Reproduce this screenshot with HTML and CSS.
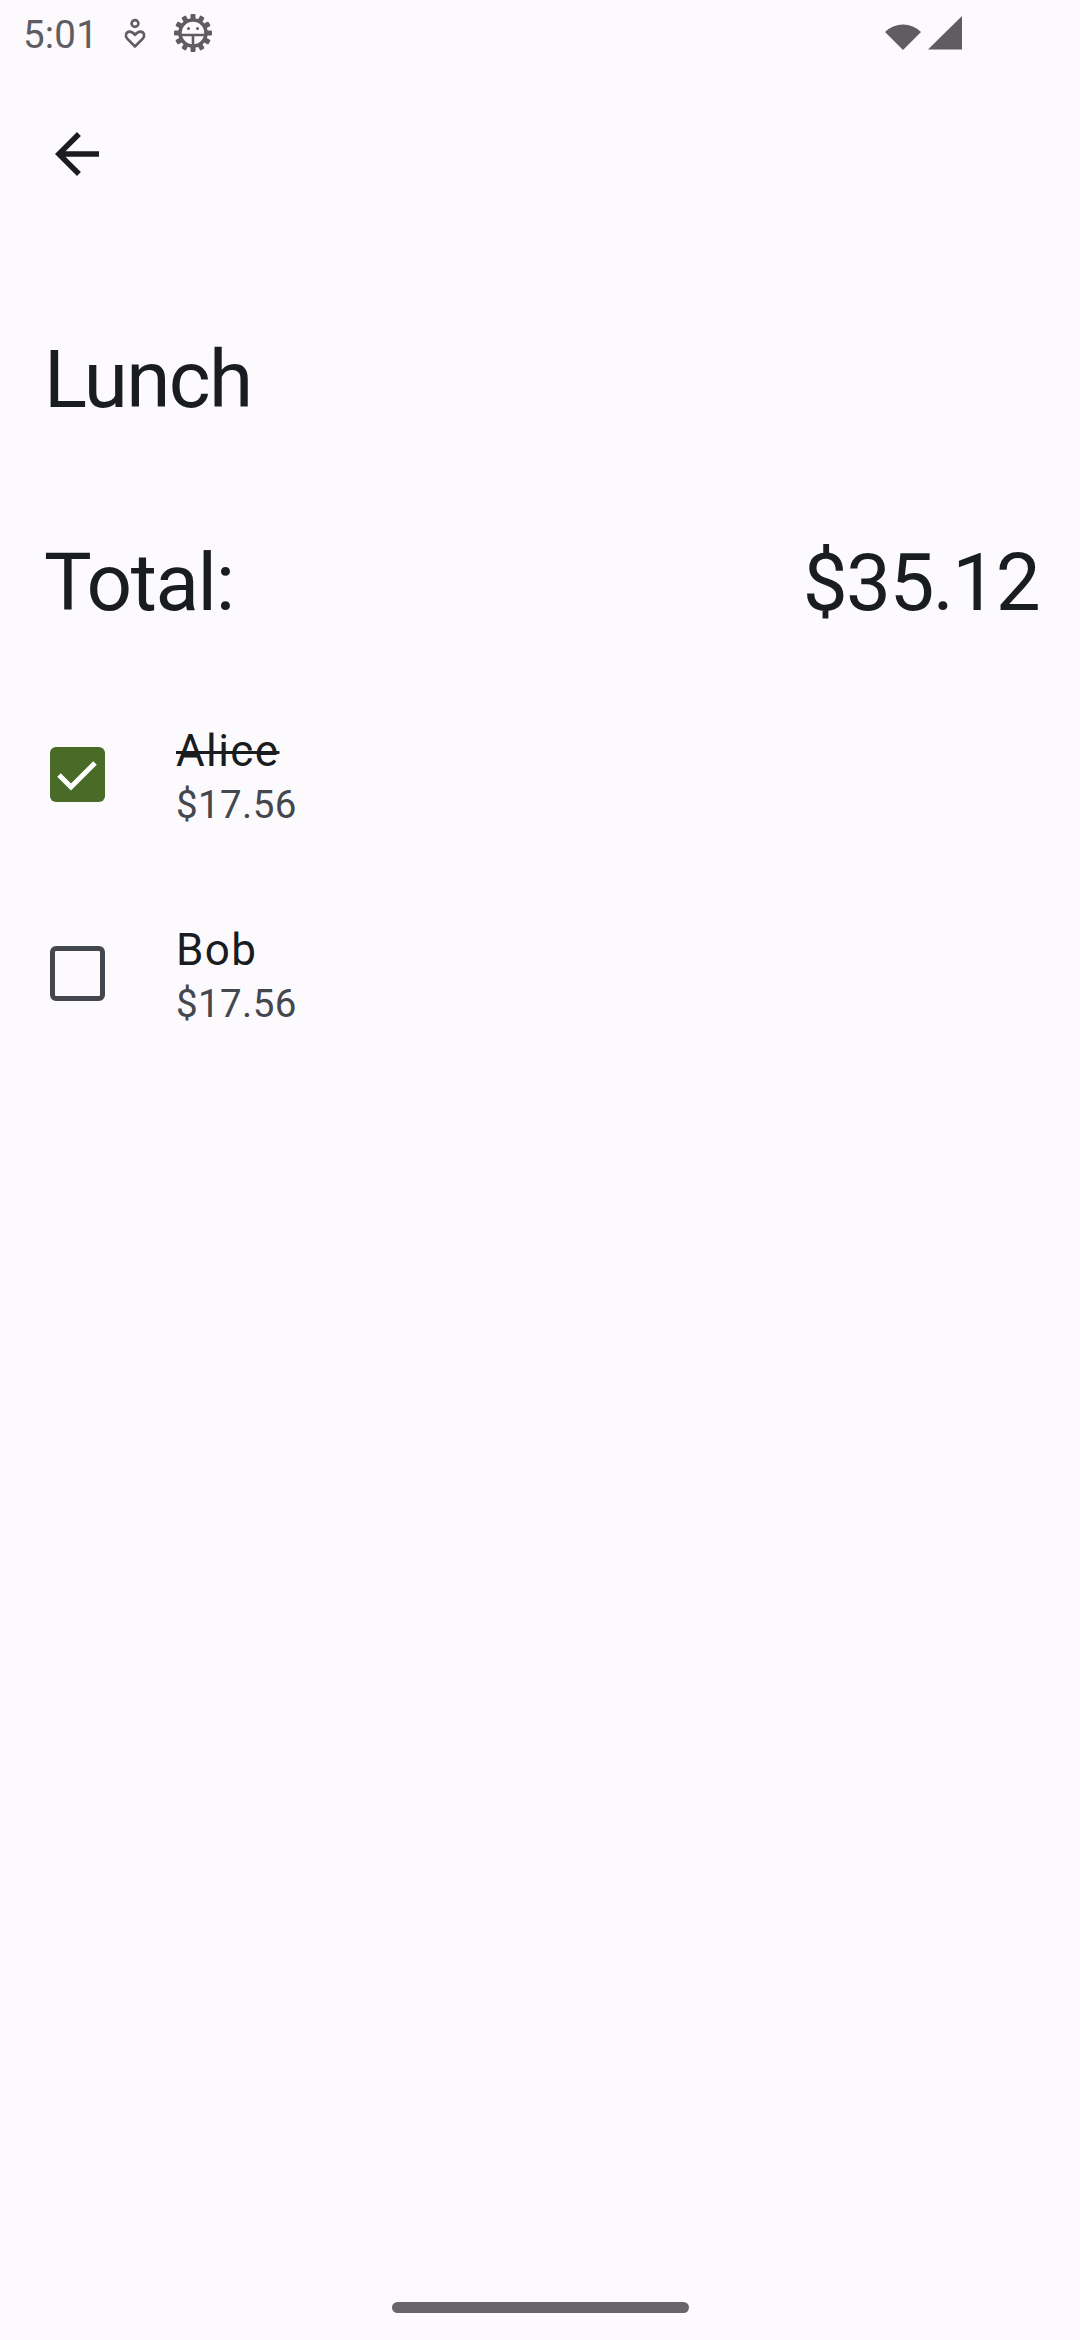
FILE: index.html
```html
<!DOCTYPE html>
<html lang="en">
<head>
<meta charset="utf-8">
<title>Lunch</title>
<link rel="stylesheet" href="styles.css">
</head>
<body>
<div class="screen">
  <div class="status-bar">
    <div class="status-left">
      <span class="clock">5:01</span>
      <svg class="ic-heart" width="24" height="32" viewBox="0 0 24 32">
        <circle cx="12" cy="5.5" r="3.4" fill="none" stroke="#605d62" stroke-width="2.6"/>
        <path d="M12 28.5 L4.2 20.7 C1.8 18.2 2.8 13.6 6.6 13.6 C9 13.6 10.5 15 12 16.8 C13.5 15 15 13.6 17.4 13.6 C21.2 13.6 22.2 18.2 19.8 20.7 Z" fill="none" stroke="#605d62" stroke-width="2.6" stroke-linejoin="round"/>
      </svg>
      <svg class="ic-gear" width="40" height="40" viewBox="0 0 40 40">
        <g fill="#605d62">
          <rect x="17.5" y="1" width="5" height="6" rx="1"/>
          <rect x="17.5" y="1" width="5" height="6" rx="1" transform="rotate(30 20 20)"/>
          <rect x="17.5" y="1" width="5" height="6" rx="1" transform="rotate(60 20 20)"/>
          <rect x="17.5" y="1" width="5" height="6" rx="1" transform="rotate(90 20 20)"/>
          <rect x="17.5" y="1" width="5" height="6" rx="1" transform="rotate(120 20 20)"/>
          <rect x="17.5" y="1" width="5" height="6" rx="1" transform="rotate(150 20 20)"/>
          <rect x="17.5" y="1" width="5" height="6" rx="1" transform="rotate(180 20 20)"/>
          <rect x="17.5" y="1" width="5" height="6" rx="1" transform="rotate(210 20 20)"/>
          <rect x="17.5" y="1" width="5" height="6" rx="1" transform="rotate(240 20 20)"/>
          <rect x="17.5" y="1" width="5" height="6" rx="1" transform="rotate(270 20 20)"/>
          <rect x="17.5" y="1" width="5" height="6" rx="1" transform="rotate(300 20 20)"/>
          <rect x="17.5" y="1" width="5" height="6" rx="1" transform="rotate(330 20 20)"/>
        </g>
        <circle cx="20" cy="20" r="13" fill="none" stroke="#605d62" stroke-width="3.6"/>
        <path d="M8 22 H32 M20 22 V32" stroke="#605d62" stroke-width="2.6"/>
        <circle cx="15.5" cy="15.5" r="1.5" fill="#605d62"/>
        <circle cx="24.5" cy="15.5" r="1.5" fill="#605d62"/>
      </svg>
    </div>
    <div class="status-right">
      <svg class="ic-wifi" width="42" height="35" viewBox="0 0 42 35">
        <path d="M21 34 L3 16 A25.5 25.5 0 0 1 39 16 Z" fill="#605d62"/>
      </svg>
      <svg class="ic-signal" width="34" height="34" viewBox="0 0 34 34">
        <path d="M0 33.5 H34 V0 Z" fill="#605d62"/>
      </svg>
    </div>
  </div>

  <div class="app-bar">
    <button class="icon-btn" aria-label="Back">
      <svg width="66" height="66" viewBox="0 0 24 24">
        <path d="M20 11H7.83l5.59-5.59L12 4l-8 8 8 8 1.41-1.41L7.83 13H20v-2z" fill="#1a1c20"/>
      </svg>
    </button>
  </div>

  <main class="content">
    <h1 class="title">Lunch</h1>
    <div class="total-row">
      <span>Total:</span>
      <span class="total-amount">$35.12</span>
    </div>

    <ul class="people">
      <li class="person">
        <span class="check-wrap">
          <span class="checkbox checked">
            <svg width="54" height="54" viewBox="0 0 54 54">
              <path d="M9 28 L21 40 L45 16" fill="none" stroke="#ffffff" stroke-width="5"/>
            </svg>
          </span>
        </span>
        <span class="person-text">
          <span class="person-name done">Alice</span>
          <span class="person-amount">$17.56</span>
        </span>
      </li>
      <li class="person">
        <span class="check-wrap">
          <span class="checkbox"></span>
        </span>
        <span class="person-text">
          <span class="person-name">Bob</span>
          <span class="person-amount">$17.56</span>
        </span>
      </li>
    </ul>
  </main>

  <div class="nav-bar">
    <span class="nav-handle"></span>
  </div>
</div>
</body>
</html>
```

FILE: styles.css
```css
* {
  box-sizing: border-box;
}

html, body {
  margin: 0;
  padding: 0;
  background: #fcfafd;
}

body {
  font-family: Roboto, "Noto Sans", "Liberation Sans", sans-serif;
  color: #1a1c20;
}

.screen {
  width: 1080px;
  height: 2340px;
  display: flex;
  flex-direction: column;
  overflow: hidden;
  background: #fcfafd;
}

.status-bar {
  height: 66px;
  flex: none;
  display: flex;
  align-items: center;
  justify-content: space-between;
  padding: 0 118px 0 23px;
}

.status-left {
  display: flex;
  align-items: center;
}

.clock {
  font-size: 38.5px;
  line-height: 66px;
  padding-top: 3px;
  color: #605d62;
  letter-spacing: 0.2px;
}

.ic-heart {
  margin-left: 25px;
  margin-top: 1px;
}

.ic-gear {
  margin-left: 26px;
}

.status-right {
  display: flex;
  align-items: center;
  gap: 4px;
}

.ic-signal {
  margin-top: -1px;
}

.app-bar {
  height: 176px;
  flex: none;
  display: flex;
  align-items: center;
  padding-left: 44px;
}

.icon-btn {
  width: 66px;
  height: 66px;
  padding: 0;
  border: 0;
  background: transparent;
  display: block;
}

.icon-btn svg {
  display: block;
}

.content {
  flex: 1;
  display: flex;
  flex-direction: column;
}

.title {
  margin: 90px 0 0 0;
  padding: 0 44px;
  font-size: 80px;
  font-weight: 400;
  line-height: 96px;
  letter-spacing: -1.6px;
  color: #191c20;
}

.total-row {
  margin-top: 107px;
  padding: 0 44px;
  display: flex;
  justify-content: space-between;
  font-size: 80px;
  line-height: 96px;
  letter-spacing: -1.4px;
  color: #191c20;
}

.total-amount {
  letter-spacing: -1.6px;
  margin-right: -3px;
}

.people {
  list-style: none;
  margin: 44px 0 0 0;
  padding: 0;
}

.person {
  min-height: 199px;
  display: flex;
  align-items: center;
  padding-left: 44px;
  gap: 66px;
}

.check-wrap {
  width: 66px;
  height: 66px;
  display: flex;
  align-items: center;
  justify-content: center;
}

.checkbox {
  width: 55px;
  height: 55px;
  border: 5px solid #44474e;
  border-radius: 6px;
  display: block;
}

.checkbox.checked {
  background: #4a6a28;
  border: 0;
}

.checkbox svg {
  display: block;
}

.person-text {
  display: flex;
  flex-direction: column;
  margin-top: 3px;
}

.person-name {
  font-size: 44px;
  line-height: 54px;
  color: #191c20;
  letter-spacing: 1.4px;
}

.person-name.done {
  text-decoration: line-through;
  text-decoration-thickness: 3px;
}

.person-amount {
  margin-top: 3px;
  font-size: 38.5px;
  line-height: 48px;
  color: #44474e;
  letter-spacing: 0.4px;
}

.nav-bar {
  height: 66px;
  flex: none;
  display: flex;
  align-items: center;
  justify-content: center;
}

.nav-handle {
  width: 297px;
  height: 11px;
  border-radius: 6px;
  background: #69666a;
}
```
